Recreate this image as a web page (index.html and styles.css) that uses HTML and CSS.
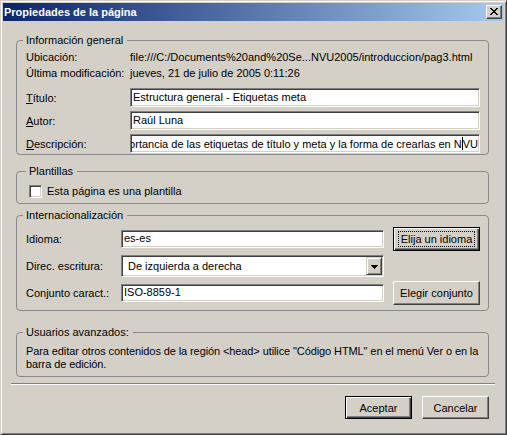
FILE: index.html
```html
<!DOCTYPE html>
<html lang="es">
<head>
<meta charset="utf-8">
<title>Propiedades de la página</title>
<link rel="stylesheet" href="styles.css">
</head>
<body>
<div class="window">
  <div class="titlebar">
    <span class="title">Propiedades de la página</span>
    <span class="caption-btn">
      <svg width="8" height="7" viewBox="0 0 8 7" shape-rendering="crispEdges" fill="#000">
        <rect x="0" y="0" width="2" height="1"/><rect x="6" y="0" width="2" height="1"/>
        <rect x="1" y="1" width="2" height="1"/><rect x="5" y="1" width="2" height="1"/>
        <rect x="2" y="2" width="4" height="1"/>
        <rect x="3" y="3" width="2" height="1"/>
        <rect x="2" y="4" width="4" height="1"/>
        <rect x="1" y="5" width="2" height="1"/><rect x="5" y="5" width="2" height="1"/>
        <rect x="0" y="6" width="2" height="1"/><rect x="6" y="6" width="2" height="1"/>
      </svg>
    </span>
  </div>
  <div class="client">
    <fieldset class="group g-info">
      <legend>Información general</legend>
      <div class="info-grid">
        <span>Ubicación:</span><span>file:///C:/Documents%20and%20Se...NVU2005/introduccion/pag3.html</span>
        <span>Última modificación:</span><span>jueves, 21 de julio de 2005 0:11:26</span>
      </div>
      <div class="field-grid">
        <span class="lbl"><u>T</u>ítulo:</span><div class="textbox">Estructura general - Etiquetas meta</div>
        <span class="lbl"><u>A</u>utor:</span><div class="textbox">Raúl Luna</div>
        <span class="lbl"><u>D</u>escripción:</span><div class="textbox scrolled"><span>Importancia de las etiquetas de título y meta y la forma de crearlas en N</span><span class="caret"></span><span>VU</span></div>
      </div>
    </fieldset>

    <fieldset class="group g-tpl">
      <legend>Plantillas</legend>
      <div class="check-row"><span class="checkbox"></span><span>Esta página es una plantilla</span></div>
    </fieldset>

    <fieldset class="group g-intl">
      <legend>Internacionalización</legend>
      <div class="intl-grid">
        <span class="lbl">Idioma:</span><div class="textbox short">es-es</div><button class="btn default"><span class="focus">Elija un idioma</span></button>
        <span class="lbl">Direc. escritura:</span>
        <div class="combo"><span class="combo-text">De izquierda a derecha</span><span class="combo-btn"><svg width="7" height="4" viewBox="0 0 7 4" shape-rendering="crispEdges" fill="#000"><rect x="0" y="0" width="7" height="1"/><rect x="1" y="1" width="5" height="1"/><rect x="2" y="2" width="3" height="1"/><rect x="3" y="3" width="1" height="1"/></svg></span></div>
        <span></span>
        <span class="lbl">Conjunto caract.:</span><div class="textbox short">ISO-8859-1</div><button class="btn">Elegir conjunto</button>
      </div>
    </fieldset>

    <fieldset class="group g-adv">
      <legend>Usuarios avanzados:</legend>
      <p class="adv-text">Para editar otros contenidos de la región &lt;head&gt; utilice "Código HTML" en el menú Ver o en la<br>barra de edición.</p>
    </fieldset>

    <div class="separator"></div>

    <div class="actions">
      <button class="btn default wide">Aceptar</button>
      <button class="btn wide">Cancelar</button>
    </div>
  </div>
</div>
</body>
</html>
```

FILE: styles.css
```css
html, body {
  margin: 0;
  padding: 0;
  background: #d4d0c8;
}

body {
  font-family: "Liberation Sans", Arial, sans-serif;
  font-size: 11px;
  color: #000;
}

.window {
  width: 507px;
  height: 435px;
  box-sizing: border-box;
  border: 1px solid;
  border-color: #d4d0c8 #404040 #404040 #d4d0c8;
  box-shadow: inset 1px 1px #fff, inset -1px -1px #808080;
  padding: 2px;
  display: flex;
  flex-direction: column;
  background: #d4d0c8;
}

.titlebar {
  height: 18px;
  flex: none;
  display: flex;
  align-items: center;
  justify-content: space-between;
  padding: 0 2px 0 1px;
  background: linear-gradient(to right, #0a246a, #a6caf0);
  color: #fff;
  font-weight: bold;
}

.title {
  line-height: 18px;
}

.caption-btn {
  width: 16px;
  height: 14px;
  box-sizing: border-box;
  display: flex;
  align-items: center;
  justify-content: center;
  background: #d4d0c8;
  border: 1px solid;
  border-color: #fff #404040 #404040 #fff;
  box-shadow: inset -1px -1px #808080;
  padding-bottom: 1px;
  padding-right: 1px;
}

.caption-btn svg {
  display: block;
}

.client {
  flex: 1;
  display: flex;
  flex-direction: column;
}

/* group boxes */
.group {
  margin: 0 15px 0 13px;
  border: 1px solid #8a8a8a;
  border-radius: 4px;
  min-width: 0;
}

.group legend {
  padding: 0 4px 0 3px;
  margin-left: -3px;
  line-height: 13px;
}

.g-info {
  margin-top: 13px;
  padding: 2px 8px 1px 9px;
}

.g-tpl {
  margin-top: 10px;
  padding: 7px 8px 5px 12px;
}

.g-intl {
  margin-top: 5px;
  padding: 5px 8px 5px 9px;
}

.g-adv {
  margin-top: 15px;
  padding: 6px 8px 5px 9px;
}

/* info rows */
.info-grid {
  display: grid;
  grid-template-columns: 104px 1fr;
  line-height: 16px;
  white-space: nowrap;
}

.field-grid {
  margin-top: 7px;
  display: grid;
  grid-template-columns: 104px 1fr;
  grid-auto-rows: 19px;
  row-gap: 4px;
  align-items: center;
}

.lbl u {
  text-decoration: underline;
  text-underline-offset: 1px;
}

.textbox {
  height: 19px;
  box-sizing: border-box;
  background: #fff;
  border: 1px solid;
  border-color: #808080 #fff #fff #808080;
  box-shadow: inset 1px 1px #404040, inset -1px -1px #d4d0c8;
  padding: 0 2px 0 2px;
  line-height: 16px;
  white-space: nowrap;
  overflow: hidden;
}

.textbox.short {
  height: 18px;
  line-height: 15px;
}

.textbox.scrolled {
  display: flex;
  justify-content: flex-end;
  align-items: center;
  padding-right: 1px;
}

.textbox.scrolled span {
  flex: none;
}

.caret {
  display: inline-block;
  width: 1px;
  height: 13px;
  background: #000;
}

/* checkbox */
.check-row {
  display: flex;
  align-items: center;
  gap: 5px;
  line-height: 13px;
}

.checkbox {
  width: 13px;
  height: 13px;
  box-sizing: border-box;
  background: #fff;
  border: 1px solid;
  border-color: #808080 #fff #fff #808080;
  box-shadow: inset 1px 1px #404040, inset -1px -1px #d4d0c8;
  flex: none;
}

/* internationalisation */
.intl-grid {
  display: grid;
  grid-template-columns: 86px 263px 87px;
  column-gap: 9px;
  grid-template-rows: 24px 22px 24px;
  row-gap: 4px;
  align-items: center;
}

.combo {
  height: 22px;
  box-sizing: border-box;
  background: #fff;
  border: 1px solid;
  border-color: #808080 #fff #fff #808080;
  box-shadow: inset 1px 1px #404040, inset -1px -1px #d4d0c8;
  padding: 1px;
  display: flex;
  align-items: stretch;
}

.combo-text {
  flex: 1;
  padding-left: 5px;
  line-height: 18px;
}

.combo-btn {
  width: 16px;
  box-sizing: border-box;
  background: #d4d0c8;
  border: 1px solid;
  border-color: #d4d0c8 #404040 #404040 #d4d0c8;
  box-shadow: inset 1px 1px #fff, inset -1px -1px #808080;
  display: flex;
  align-items: center;
  justify-content: center;
}

.combo-btn svg {
  display: block;
  margin-top: 1px;
}

/* buttons */
.btn {
  font: inherit;
  color: #000;
  height: 24px;
  padding: 0;
  margin: 0;
  background: #d4d0c8;
  border: 1px solid;
  border-color: #fff #404040 #404040 #fff;
  box-shadow: inset -1px -1px #808080;
  display: flex;
  align-items: center;
  justify-content: center;
  white-space: nowrap;
}

.btn.default {
  border-color: #000;
  box-shadow: inset 1px 1px #fff, inset -1px -1px #404040, inset -2px -2px #808080;
}

.btn .focus {
  display: flex;
  align-items: center;
  justify-content: center;
  width: 77px;
  height: 16px;
  border: 1px dotted #000;
  box-sizing: border-box;
}

.btn.wide {
  width: 67px;
  height: 23px;
}

/* advanced */
.adv-text {
  margin: 0;
  line-height: 13px;
  white-space: nowrap;
  letter-spacing: -0.1px;
}

.separator {
  margin: 6px 9px 0 8px;
  border-top: 1px solid #808080;
  border-bottom: 1px solid #fff;
}

.actions {
  margin: 11px 15px 0 0;
  display: flex;
  justify-content: flex-end;
  gap: 10px;
}
```
